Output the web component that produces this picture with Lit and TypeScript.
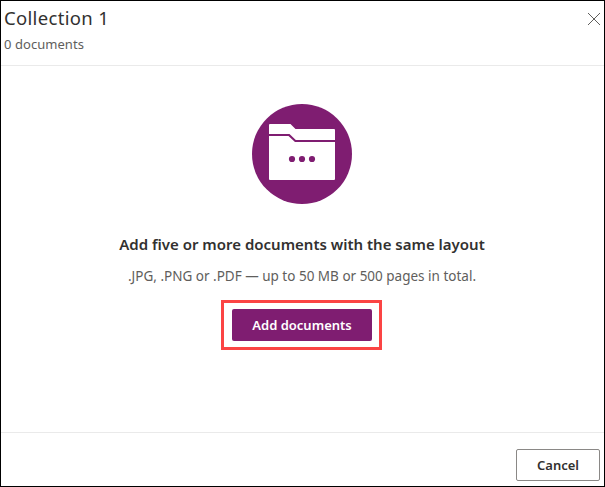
import { LitElement, html, css } from "lit";
import { customElement } from "lit/decorators.js";

@customElement("app-root")
export class AppRoot extends LitElement {
  static styles = css`
    :host {
      display: block;
      height: 100vh;
      font-family: "Noto Sans", "Open Sans", sans-serif;
      color: #323130;
    }
    .panel {
      box-sizing: border-box;
      height: 100%;
      border: 1px solid #000;
      background: #fff;
      display: flex;
      flex-direction: column;
      white-space: nowrap;
    }
    .header {
      box-sizing: border-box;
      height: 65px;
      flex: none;
      display: flex;
      justify-content: space-between;
      padding: 5px 4px 0 3px;
      border-bottom: 1px solid #eaeaea;
    }
    .title {
      margin: 0;
      font-size: 18.5px;
      line-height: 24px;
      font-weight: 400;
      letter-spacing: 0.32px;
    }
    .count {
      margin-top: 4px;
      font-size: 13px;
      line-height: 20px;
      letter-spacing: 0.05px;
      color: #605e5c;
    }
    .close {
      width: 12px;
      height: 12px;
      margin-top: 7px;
      padding: 0;
      border: 0;
      background: none;
      display: block;
    }
    svg {
      display: block;
    }
    .body {
      flex: 1;
      display: flex;
      flex-direction: column;
      align-items: center;
      padding: 38px 1px 0 0;
    }
    .heading {
      margin: 28px 0 0;
      font-size: 15px;
      line-height: 24px;
      font-weight: 600;
    }
    .hint {
      margin: 10px 0 0;
      font-size: 13.5px;
      line-height: 20px;
      color: #605e5c;
    }
    .highlight {
      margin: 14px 1px 0 0;
      padding: 6px 7px 6px 8px;
      border: 3px solid #fb4444;
    }
    button {
      box-sizing: border-box;
      height: 32px;
      padding: 0;
      border-radius: 2px;
      font-family: inherit;
      font-size: 13px;
      font-weight: 600;
      line-height: 20px;
    }
    .primary {
      display: block;
      width: 140px;
      border: 0;
      background: #7f1d71;
      color: #fff;
    }
    .footer {
      box-sizing: border-box;
      height: 54px;
      flex: none;
      display: flex;
      justify-content: flex-end;
      padding: 16px 4px 0 0;
      border-top: 1px solid #eaeaea;
    }
    .cancel {
      width: 84px;
      border: 1px solid #8a8886;
      background: #fff;
      color: #323130;
    }
  `;

  render() {
    return html`
      <section class="panel">
        <header class="header">
          <div>
            <h1 class="title"><span>Collection 1</span></h1>
            <div class="count"><span>0 documents</span></div>
          </div>
          <button class="close" aria-label="Close">
            <svg width="12" height="12" viewBox="0 0 12 12">
              <path d="M0 0L12 12M12 0L0 12" stroke="#605e5c" stroke-width="1" />
            </svg>
          </button>
        </header>
        <main class="body">
          <svg width="100" height="100" viewBox="0 0 100 100">
            <circle cx="50" cy="50" r="50" fill="#7f1d71" />
            <path
              fill="#fff"
              d="M18 20H38.5L43.5 25H82Q83 25 83 26V36H56.5H43.8L37.5 30H17V21Q17 20 18 20Z"
            />
            <path
              fill="#fff"
              d="M17 32H36.5L43 38H83V75Q83 76 82 76H18Q17 76 17 75Z"
            />
            <g fill="#7f1d71">
              <circle cx="40" cy="55" r="3.1" />
              <circle cx="50" cy="55" r="3.1" />
              <circle cx="60" cy="55" r="3.1" />
            </g>
          </svg>
          <h2 class="heading"><span>Add five or more documents with the same layout</span></h2>
          <p class="hint"><span>.JPG, .PNG or .PDF — up to 50 MB or 500 pages in total.</span></p>
          <div class="highlight">
            <button class="primary"><span>Add documents</span></button>
          </div>
        </main>
        <footer class="footer">
          <button class="cancel"><span>Cancel</span></button>
        </footer>
      </section>
    `;
  }
}
